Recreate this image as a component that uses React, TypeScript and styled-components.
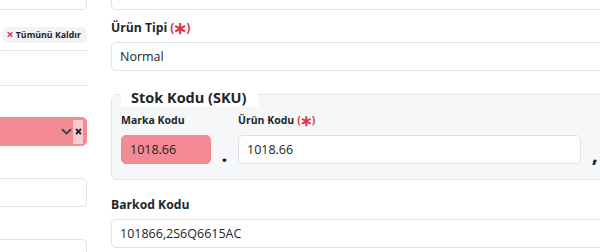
import styled, { createGlobalStyle } from 'styled-components';

const GlobalStyle = createGlobalStyle`
	html, body {
		margin: 0;
		padding: 0;
		overflow: hidden;
		background: #ffffff;
	}
	body {
		font-family: "Open Sans", "Noto Sans", sans-serif;
		color: #212529;
	}
`;

const Page = styled.div`
	display: flex;
	gap: 24px;
	margin-top: -19px;
	margin-left: -60px;
	width: 800px;
`;

const Sidebar = styled.div`
	width: 147px;
	flex: none;
	display: flex;
	flex-direction: column;
`;

const Main = styled.div`
	width: 560px;
	flex: none;
	display: flex;
	flex-direction: column;
`;

const Field = styled.div<{ $invalid?: boolean; $mt?: number }>`
	box-sizing: border-box;
	height: 29px;
	margin-top: ${({ $mt }) => $mt ?? 0}px;
	padding: 0 8px;
	display: flex;
	align-items: center;
	border: 1px solid ${({ $invalid }) => ($invalid ? '#f38a94' : '#dee2e6')};
	border-radius: 5px;
	background: ${({ $invalid }) => ($invalid ? '#f38a94' : '#ffffff')};
	font-size: 12.5px;
	color: #212529;
	white-space: nowrap;
	overflow: hidden;
`;

const SelectBox = styled(Field)`
	padding-right: 3px;
	gap: 1px;
`;

const Grow = styled.span`
	flex: 1;
`;

const ClearButton = styled.span`
	width: 10px;
	height: 24px;
	display: flex;
	align-items: center;
	justify-content: center;
	background: rgba(255, 255, 255, 0.55);
`;

const Pill = styled.div`
	align-self: flex-end;
	margin-top: 17px;
	height: 16px;
	padding: 0 6px 0 5px;
	display: flex;
	align-items: center;
	gap: 2px;
	border-radius: 6px;
	background: #f1f3f5;
	font-size: 8.8px;
	font-weight: 700;
	color: #212529;

	.x {
		color: #e03b4b;
		font-size: 12.5px;
		line-height: 12px;
	}
`;

const Divider = styled.div<{ $mt: number }>`
	margin-top: ${({ $mt }) => $mt}px;
	border-top: 1px solid #e3e5e8;
`;

const Label = styled.div<{ $mt?: number }>`
	margin-top: ${({ $mt }) => $mt ?? 0}px;
	margin-bottom: 4px;
	font-size: 12.2px;
	line-height: 20px;
	font-weight: 700;
	color: #212529;
	white-space: nowrap;
`;

const SmallLabel = styled(Label)`
	font-size: 10.5px;
	line-height: 17px;
	margin-bottom: 6px;
`;

const Required = styled.span`
	color: #dc3545;
	margin-left: 3px;

	.star {
		display: inline-block;
		font-size: 1.4em;
		line-height: 0;
		vertical-align: -0.12em;
		font-weight: 700;
		margin: 0 -1px;
	}
`;

const Group = styled.div`
	margin-top: 23px;
	padding: 0 9px 15px;
	display: flex;
	flex-direction: column;
	border: 1px solid #e3e5e9;
	border-radius: 6px;
	background: #f6f7f9;
`;

const Legend = styled.span`
	align-self: flex-start;
	margin-top: -7px;
	padding: 0 11px 0 10px;
	background: #ffffff;
	font-size: 14.5px;
	line-height: 19px;
	font-weight: 700;
	color: #212529;
`;

const CodeRow = styled.div`
	margin-top: 5px;
	display: flex;
	align-items: flex-end;
`;

const CodeCol = styled.div<{ $width: number }>`
	width: ${({ $width }) => $width}px;
	flex: none;
	display: flex;
	flex-direction: column;
`;

const Sep = styled.span<{ $width: number; $ml?: number }>`
	width: ${({ $width }) => $width}px;
	margin-left: ${({ $ml }) => $ml ?? 0}px;
	flex: none;
	text-align: center;
	font-size: 22px;
	line-height: 21px;
	font-weight: 700;
	color: #1d2433;
`;

const Chevron = () => (
	<svg width="11" height="7" viewBox="0 0 11 7">
		<path d="M1 1.2l4.5 4.3 4.5-4.3" fill="none" stroke="#3d444b" strokeWidth="1.9" />
	</svg>
);

const Cross = () => (
	<svg width="7" height="7" viewBox="0 0 7 7">
		<path d="M1 1l5 5M6 1l-5 5" stroke="#212529" strokeWidth="1.8" />
	</svg>
);

const Star = () => (
	<Required>
		(<span className="star">∗</span>)
	</Required>
);

export default function App() {
	return (
		<>
			<GlobalStyle />
			<Page>
				<Sidebar>
					<Field />
					<Pill>
						<span className="x">×</span>
						<span>Tümünü Kaldır</span>
					</Pill>
					<Divider $mt={7} />
					<Divider $mt={34} />
					<SelectBox $invalid $mt={31}>
						<Grow />
						<Chevron />
						<ClearButton>
							<Cross />
						</ClearButton>
					</SelectBox>
					<Field $mt={32} />
					<Field $mt={32} />
				</Sidebar>
				<Main>
					<Field>Adet</Field>
					<Label $mt={8}>
						Ürün Tipi
						<Star />
					</Label>
					<Field>Normal</Field>
					<Group>
						<Legend>Stok Kodu (SKU)</Legend>
						<CodeRow>
							<CodeCol $width={90}>
								<SmallLabel>Marka Kodu</SmallLabel>
								<Field $invalid>1018.66</Field>
							</CodeCol>
							<Sep $width={27}>.</Sep>
							<CodeCol $width={343}>
								<SmallLabel>
									Ürün Kodu
									<Star />
								</SmallLabel>
								<Field>1018.66</Field>
							</CodeCol>
							<Sep $width={12} $ml={8}>
								,
							</Sep>
						</CodeRow>
					</Group>
					<Label $mt={15}>Barkod Kodu</Label>
					<Field>101866,2S6Q6615AC</Field>
				</Main>
			</Page>
		</>
	);
}
